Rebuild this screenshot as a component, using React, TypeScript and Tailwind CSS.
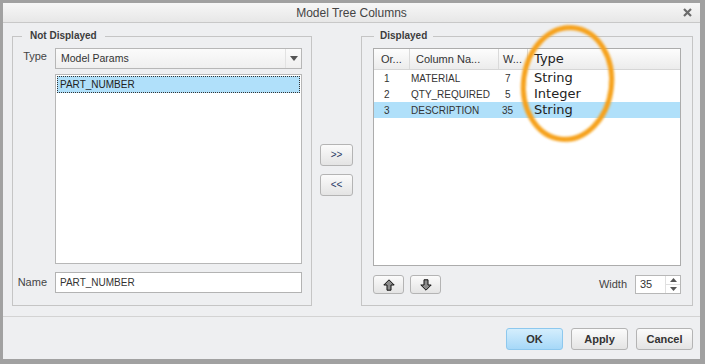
import React from 'react';

interface Row {
  order: string;
  name: string;
  width: string;
  type: string;
  selected?: boolean;
}

const rows: Row[] = [
  { order: '1', name: 'MATERIAL', width: '7', type: 'String' },
  { order: '2', name: 'QTY_REQUIRED', width: '5', type: 'Integer' },
  { order: '3', name: 'DESCRIPTION', width: '35', type: 'String', selected: true },
];

function Arrow({ down }: { down?: boolean }) {
  return (
    <svg width="12" height="12" viewBox="0 0 12 12" className={down ? 'rotate-180' : ''}>
      <path d="M6 0.8 L11.2 6 L8 6 L8 11.2 L4 11.2 L4 6 L0.8 6 Z" fill="#8c8c8c" stroke="#111" strokeWidth="1" strokeLinejoin="miter" />
    </svg>
  );
}

const btn = 'flex items-center justify-center rounded-[3px] border border-[#b4b4b4] bg-gradient-to-b from-[#fbfbfb] to-[#e4e4e4]';

export default function App() {
  return (
    <div className="relative w-[705px] h-[364px] font-['Liberation_Sans',Arial,sans-serif] text-[#333]">
      <div className="w-full h-full flex flex-col bg-[#eeeff1] border-t-[3px] border-l-[3px] border-r-[5px] border-b-[5px] border-[#a1a1a1] overflow-hidden">
        {/* title bar */}
        <div className="h-[20px] shrink-0 flex items-center bg-gradient-to-b from-[#f7f7f7] to-[#e7e7e7] border-b border-[#c8c8c8]">
          <div className="w-[24px]" />
          <div className="flex-1 text-center text-[12px] leading-[14px] text-[#444]">Model Tree Columns</div>
          <div className="w-[24px] flex items-center justify-start pl-[7px]">
            <svg width="9" height="9" viewBox="0 0 9 9">
              <path d="M1 1 L8 8 M8 1 L1 8" stroke="#6b6b6b" strokeWidth="2.2" />
            </svg>
          </div>
        </div>

        {/* content */}
        <div className="h-[293px] shrink-0 flex pl-[9px] pr-[7px] pt-[6px] pb-[10px]">
          {/* Not Displayed */}
          <fieldset className="w-[300px] h-[277px] border border-[#c5c5c5] flex flex-col">
            <legend className="ml-[9px] px-[8px] text-[10px] leading-[14px] font-bold text-[#3c3c3c]">Not Displayed</legend>
            <div className="grid grid-cols-[42px_1fr] pr-[9px] pt-[5px] pb-[12px]">
              <div className="text-right pr-[8px] text-[11px] leading-[14px] pt-[1px] text-[#444]">Type</div>
              <div className="h-[21px] flex border border-[#b7b7b7] bg-gradient-to-b from-[#fbfbfb] to-[#efefef]">
                <div className="flex-1 flex items-center pl-[5px] text-[10.5px] text-[#333]">Model Params</div>
                <div className="w-[16px] flex items-center justify-center border-l border-[#e2e2e2]">
                  <svg width="8" height="5" viewBox="0 0 8 5"><path d="M0 0 L8 0 L4 5 Z" fill="#555" /></svg>
                </div>
              </div>

              <div />
              <div className="mt-[5px] h-[190px] border border-[#b7b7b7] bg-white p-[1px]">
                <div className="h-[17px] flex items-center pl-[2px] bg-[#b0e0fa] border border-dotted border-[#333] text-[10px] text-[#222]">PART_NUMBER</div>
              </div>

              <div className="mt-[8px] h-[21px] flex items-center justify-end pr-[8px] text-[11px] text-[#444]">Name</div>
              <div className="mt-[8px] h-[21px] flex items-center pl-[4px] border border-[#b3b3b3] bg-white text-[10px] text-[#333]">PART_NUMBER</div>
            </div>
          </fieldset>

          {/* move buttons */}
          <div className="w-[49px] flex flex-col items-center justify-center gap-[8px] pt-[4px]">
            <div className={`${btn} w-[33px] h-[22px] text-[10px] text-[#2a3a66]`}>&gt;&gt;</div>
            <div className={`${btn} w-[33px] h-[22px] text-[10px] text-[#2a3a66]`}>&lt;&lt;</div>
          </div>

          {/* Displayed */}
          <fieldset className="w-[332px] h-[277px] border border-[#c5c5c5] flex flex-col">
            <legend className="ml-[12px] px-[6px] text-[10px] leading-[14px] font-bold text-[#3c3c3c]">Displayed</legend>
            <div className="flex flex-col pl-[11px] pr-[11px] pt-[5px] pb-[11px]">
              <div className="h-[218px] border border-[#acacac] bg-white flex flex-col">
                <div className="h-[21px] flex border-b border-[#d6d6d6] bg-gradient-to-b from-[#fdfdfd] to-[#ececec] text-[11px] text-[#333]">
                  <div className="w-[36px] flex items-center pl-[7px] border-r border-[#dadada]">Or...</div>
                  <div className="w-[89px] flex items-center pl-[6px] border-r border-[#dadada]">Column Na...</div>
                  <div className="w-[29px] flex items-center pl-[4px] border-r border-[#dadada]">W...</div>
                  <div className="flex-1 flex items-center pl-[6px] font-['DejaVu_Sans',sans-serif] text-[13px] text-[#222]">Type</div>
                </div>
                {rows.map(r => (
                  <div key={r.order} className={`h-[16px] flex items-center text-[10px] text-[#333] ${r.selected ? 'bg-[#b0e0fa]' : ''}`}>
                    <div className="w-[36px] pl-[10px]">{r.order}</div>
                    <div className="w-[89px] pl-[1px]">{r.name}</div>
                    <div className={`w-[29px] ${r.width.length > 1 ? 'pl-[3px]' : 'pl-[6px]'}`}>{r.width}</div>
                    <div className="flex-1 pl-[6px] font-['DejaVu_Sans',sans-serif] text-[13px] leading-[16px] text-[#222]">{r.type}</div>
                  </div>
                ))}
              </div>

              <div className="mt-[9px] h-[19px] flex items-center">
                <div className={`${btn} w-[31px] h-[19px]`}><Arrow /></div>
                <div className={`${btn} w-[31px] h-[19px] ml-[6px]`}><Arrow down /></div>
                <div className="flex-1" />
                <div className="text-[11px] text-[#444] mr-[8px]">Width</div>
                <div className="w-[46px] h-[19px] flex border border-[#b7b7b7] bg-white">
                  <div className="flex-1 flex items-center pl-[4px] text-[11px] text-[#333]">35</div>
                  <div className="w-[15px] flex flex-col border-l border-[#e0e0e0]">
                    <div className="flex-1 flex items-center justify-center border-b border-[#e0e0e0]">
                      <svg width="7" height="4" viewBox="0 0 7 4"><path d="M0 4 L7 4 L3.5 0 Z" fill="#555" /></svg>
                    </div>
                    <div className="flex-1 flex items-center justify-center">
                      <svg width="7" height="4" viewBox="0 0 7 4"><path d="M0 0 L7 0 L3.5 4 Z" fill="#555" /></svg>
                    </div>
                  </div>
                </div>
              </div>
            </div>
          </fieldset>
        </div>

        {/* footer */}
        <div className="flex-1 flex justify-end items-start gap-[8px] pt-[11px] pr-[7px] border-t border-[#d3d3d3]">
          <div className="w-[57px] h-[22px] flex items-center justify-center rounded-[3px] border border-[#8dc8ee] bg-gradient-to-b from-[#d4eefd] to-[#a6d8f8] text-[11px] font-bold text-[#333]">OK</div>
          <div className={`${btn} w-[57px] h-[22px] text-[11px] font-bold text-[#333]`}>Apply</div>
          <div className={`${btn} w-[57px] h-[22px] text-[11px] font-bold text-[#333]`}>Cancel</div>
        </div>
      </div>

      {/* annotation */}
      <svg className="absolute left-0 top-0 pointer-events-none" width="705" height="364" viewBox="0 0 705 364">
        <defs>
          <filter id="soft" x="-10%" y="-10%" width="120%" height="120%">
            <feGaussianBlur stdDeviation="0.8" />
          </filter>
        </defs>
        <ellipse cx="567.5" cy="83.5" rx="44" ry="56" transform="rotate(7 567.5 83.5)" fill="none" stroke="#f6a21c" strokeWidth="5" filter="url(#soft)" />
      </svg>
    </div>
  );
}
